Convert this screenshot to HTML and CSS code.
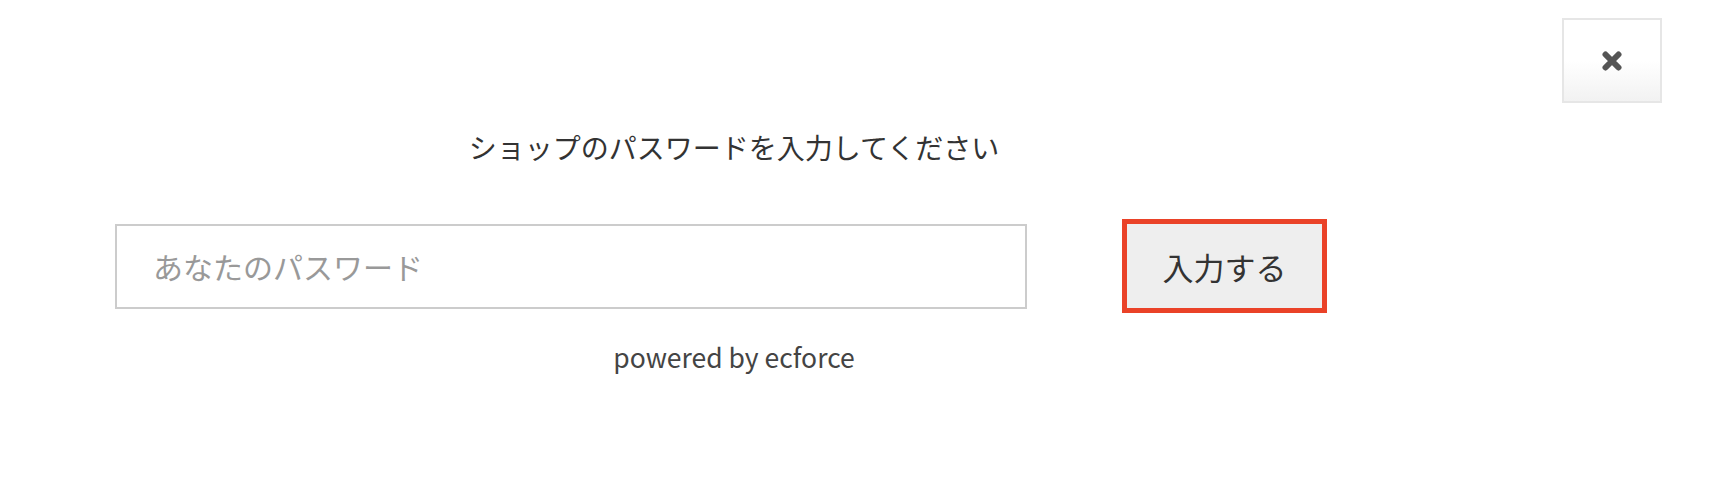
FILE: index.html
```html
<!DOCTYPE html>
<html lang="ja">
<head>
<meta charset="UTF-8">
<meta name="viewport" content="width=device-width, initial-scale=1.0">
<title>パスワード入力</title>
<link rel="stylesheet" href="styles.css">
</head>
<body>

<div class="modal">
    <div class="modal-head">
        <button type="button" class="close-btn" aria-label="閉じる">
            <svg width="20" height="20" viewBox="0 0 20 20">
                <path d="M3.5 3.5 L16.5 16.5 M16.5 3.5 L3.5 16.5" stroke="#555" stroke-width="6" stroke-linecap="round" fill="none"/>
            </svg>
        </button>
    </div>
    <div class="modal-body">
        <p class="lead">ショップのパスワードを入力してください</p>
        <form class="pw-form" onsubmit="return false;">
            <input type="password" class="pw-input" placeholder="あなたのパスワード">
            <button type="submit" class="pw-submit">入力する</button>
        </form>
        <p class="powered">powered by ecforce</p>
    </div>
</div>

</body>
</html>
```

FILE: styles.css
```css
body, html {
    margin: 0;
    height: 100%;
    background: #fff;
    font-family: "Noto Sans CJK JP", "Noto Sans", sans-serif;
    color: #333;
}
.modal-head {
    display: flex;
    justify-content: flex-end;
    padding: 18px 48px 0 0;
}
.close-btn {
    width: 100px;
    height: 85px;
    border: 2px solid #e6e6e6;
    background: linear-gradient(to bottom, #fff 0%, #fff 50%, #f2f2f2 100%);
    display: flex;
    align-items: center;
    justify-content: center;
    padding: 0;
    cursor: pointer;
}
.modal-body {
    margin-left: 115px;
    width: 1238px;
    text-align: center;
}
.lead {
    margin: 28px 0 0;
    font-size: 28px;
    line-height: 32px;
}
.pw-form {
    display: flex;
    align-items: center;
    gap: 95px;
    margin-top: 56px;
}
.pw-input {
    width: 912px;
    height: 85px;
    box-sizing: border-box;
    border: 2px solid #ccc;
    padding: 0 36px;
    font-family: inherit;
    font-size: 30px;
    color: #333;
    outline: none;
}
.pw-input::placeholder {
    color: #999;
}
.pw-submit {
    width: 205px;
    height: 94px;
    box-sizing: border-box;
    border: 5px solid #ea4228;
    background: #eee;
    font-family: inherit;
    font-size: 31px;
    color: #333;
    cursor: pointer;
}
.powered {
    margin: 29px 0 0;
    font-size: 26.5px;
    line-height: 30px;
    color: #444;
}
```
